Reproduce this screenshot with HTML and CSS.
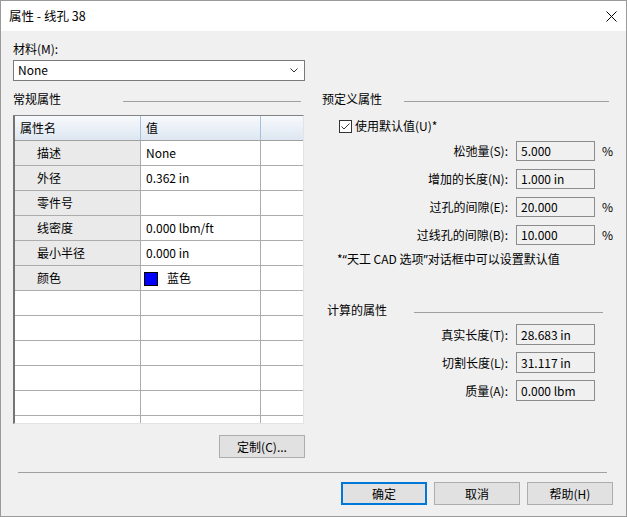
FILE: index.html
```html
<!DOCTYPE html>
<html lang="zh-CN">
<head>
  <meta charset="UTF-8">
  <title>属性 - 线孔 38</title>
  <link rel="stylesheet" href="styles.css">
</head>
<body>
  <div class="dialog">
    <div class="titlebar">
      <span class="title">属性 - 线孔 38</span>
      <svg class="close" width="11" height="11" viewBox="0 0 11 11">
        <path d="M0.5 0.5 L10.5 10.5 M10.5 0.5 L0.5 10.5" stroke="#000" stroke-width="1" fill="none"/>
      </svg>
    </div>

    <div class="content">
      <div class="columns">
        <!-- material -->
        <div class="material">
          <div class="field-label">材料(M):</div>
          <div class="combo">
            <span>None</span>
            <svg width="8" height="5" viewBox="0 0 8 5">
              <path d="M0.5 0.5 L4 4 L7.5 0.5" stroke="#333" stroke-width="1" fill="none"/>
            </svg>
          </div>
        </div>

        <!-- general properties -->
        <div class="col-left">
          <div class="group-head">
            <span>常规属性</span>
            <span class="rule rule-general"></span>
          </div>
          <div class="prop-table">
            <div class="row head">
              <div class="cell">属性名</div>
              <div class="cell">值</div>
              <div class="cell"></div>
            </div>
            <div class="row">
              <div class="cell name">描述</div>
              <div class="cell">None</div>
              <div class="cell"></div>
            </div>
            <div class="row">
              <div class="cell name">外径</div>
              <div class="cell">0.362 in</div>
              <div class="cell"></div>
            </div>
            <div class="row">
              <div class="cell name">零件号</div>
              <div class="cell"></div>
              <div class="cell"></div>
            </div>
            <div class="row">
              <div class="cell name">线密度</div>
              <div class="cell">0.000 lbm/ft</div>
              <div class="cell"></div>
            </div>
            <div class="row">
              <div class="cell name">最小半径</div>
              <div class="cell">0.000 in</div>
              <div class="cell"></div>
            </div>
            <div class="row">
              <div class="cell name">颜色</div>
              <div class="cell"><span class="swatch"></span>蓝色</div>
              <div class="cell"></div>
            </div>
            <div class="row"><div class="cell"></div><div class="cell"></div><div class="cell"></div></div>
            <div class="row"><div class="cell"></div><div class="cell"></div><div class="cell"></div></div>
            <div class="row"><div class="cell"></div><div class="cell"></div><div class="cell"></div></div>
            <div class="row"><div class="cell"></div><div class="cell"></div><div class="cell"></div></div>
            <div class="row"><div class="cell"></div><div class="cell"></div><div class="cell"></div></div>
            <div class="row"><div class="cell"></div><div class="cell"></div><div class="cell"></div></div>
          </div>
          <div class="left-actions">
            <button class="btn">定制(C)...</button>
          </div>
        </div>

        <!-- predefined + computed -->
        <div class="col-right">
          <div class="group-head">
            <span>预定义属性</span>
            <span class="rule rule-predef"></span>
          </div>
          <label class="check">
            <svg width="13" height="13" viewBox="0 0 13 13">
              <rect x="0.5" y="0.5" width="12" height="12" fill="#fff" stroke="#333"/>
              <path d="M2.5 6.5 L5 9 L10.5 3.5" stroke="#333" stroke-width="1" fill="none"/>
            </svg>
            <span>使用默认值(U)*</span>
          </label>
          <div class="fields">
            <div class="f-label">松弛量(S):</div>
            <div class="f-box">5.000</div>
            <div class="f-unit">%</div>
            <div class="f-label">增加的长度(N):</div>
            <div class="f-box">1.000 in</div>
            <div class="f-unit"></div>
            <div class="f-label">过孔的间隙(E):</div>
            <div class="f-box">20.000</div>
            <div class="f-unit">%</div>
            <div class="f-label">过线孔的间隙(B):</div>
            <div class="f-box">10.000</div>
            <div class="f-unit">%</div>
          </div>
          <div class="note">*<span class="q">“</span>天工 CAD 选项<span class="q">”</span>对话框中可以设置默认值</div>

          <div class="group-head calc-head">
            <span>计算的属性</span>
            <span class="rule rule-calc"></span>
          </div>
          <div class="fields calc">
            <div class="f-label">真实长度(T):</div>
            <div class="f-box">28.683 in</div>
            <div class="f-unit"></div>
            <div class="f-label">切割长度(L):</div>
            <div class="f-box">31.117 in</div>
            <div class="f-unit"></div>
            <div class="f-label">质量(A):</div>
            <div class="f-box">0.000 lbm</div>
            <div class="f-unit"></div>
          </div>
        </div>
      </div>

      <div class="separator"></div>

      <div class="actions">
        <button class="btn default">确定</button>
        <button class="btn">取消</button>
        <button class="btn">帮助(H)</button>
      </div>
    </div>
  </div>
</body>
</html>
```

FILE: styles.css
```css
body {
  margin: 0;
  padding: 0;
  font-family: "Microsoft YaHei UI", "Segoe UI", "Noto Sans CJK SC", sans-serif;
  font-size: 12px;
  line-height: 16px;
  color: #000;
  background: #fff;
}

.dialog {
  width: 627px;
  height: 517px;
  box-sizing: border-box;
  border: 1px solid #9a9a9a;
  background: #f0f0f0;
  display: flex;
  flex-direction: column;
}

.titlebar {
  height: 30px;
  background: #fff;
  display: flex;
  align-items: center;
  justify-content: space-between;
  padding: 0 9px 0 8px;
}

.title {
  font-size: 12.5px;
}

.close {
  display: block;
}

.content {
  padding: 10px 13px 0 12px;
}

.columns {
  display: grid;
  grid-template-columns: 292px 1fr;
  column-gap: 17px;
}

.material {
  grid-column: 1 / 3;
  width: 292px;
}

.combo {
  margin-top: 3px;
  height: 21px;
  box-sizing: border-box;
  border: 1px solid #7a7a7a;
  background: #fff;
  display: flex;
  align-items: center;
  justify-content: space-between;
  padding: 0 6px 2px 4px;
}

.combo svg {
  display: block;
  margin-top: 2px;
}

.group-head {
  margin-top: 10px;
  display: flex;
  align-items: center;
  height: 16px;
}

.rule {
  height: 1px;
  background: #a0a0a0;
  margin-top: 4px;
}

.rule-general {
  margin-left: 62px;
  width: 178px;
}

.rule-predef {
  margin-left: 22px;
  width: 205px;
}

.rule-calc {
  margin-left: 27px;
  width: 189px;
}

/* property grid */
.prop-table {
  margin-top: 8px;
  width: 291px;
  height: 309px;
  box-sizing: border-box;
  overflow: hidden;
  background: #fff;
  border-top: 1px solid #828282;
  border-left: 2px solid #747474;
  border-right: 1px solid #e3e3e3;
  border-bottom: 1px solid #e3e3e3;
}

.row {
  display: grid;
  grid-template-columns: 126px 120px 1fr;
  height: 25px;
}

.cell {
  box-sizing: border-box;
  border-bottom: 1px solid #acacac;
  border-right: 1px solid #acacac;
  padding-left: 5px;
  display: flex;
  align-items: center;
  white-space: nowrap;
}

.cell:last-child {
  border-right: none;
}

.row.head {
  background: linear-gradient(to bottom, #f7f9fc, #dce6f1);
}

.row.head .cell {
  border-right-color: #a3bfdc;
  border-bottom-color: #a0a0a0;
}

.row.head .cell:last-child {
  border-right: none;
}

.cell.name {
  background: #eaeaea;
  padding-left: 22px;
}

.swatch {
  width: 14px;
  height: 14px;
  box-sizing: border-box;
  background: #0000ff;
  border: 1px solid #000;
  margin: 1px 9px 0 -2px;
}

.left-actions {
  display: flex;
  justify-content: flex-end;
  margin-top: 11px;
}

.btn {
  font-family: inherit;
  font-size: 12px;
  width: 86px;
  height: 23px;
  padding: 0;
  background: #e1e1e1;
  border: 1px solid #adadad;
  color: #000;
}

.btn.default {
  border: 2px solid #0078d7;
}

/* right column */
.check {
  display: flex;
  align-items: center;
  margin: 11px 0 0 17px;
  gap: 3px;
}

.check svg {
  display: block;
}

.fields {
  margin-top: 7px;
  display: grid;
  grid-template-columns: 187px 79px 1fr;
  column-gap: 7px;
  row-gap: 8px;
}

.f-label {
  text-align: right;
  padding-right: 1px;
  align-self: center;
  white-space: nowrap;
}

.f-box {
  height: 20px;
  box-sizing: border-box;
  border: 1px solid #8c8c8c;
  padding-left: 4px;
  display: flex;
  align-items: center;
}

.f-unit {
  align-self: center;
}

.note {
  margin: 6px 0 0 15px;
  white-space: nowrap;
}

.note .q {
  font-family: "Segoe UI", "Noto Sans", sans-serif;
}

.calc-head {
  margin-top: 34px;
  padding-left: 5px;
}

.fields.calc {
  margin-top: 6px;
  row-gap: 7px;
}

.fields.calc .f-box {
  height: 21px;
}

.separator {
  margin: 14px 6px 0 5px;
  height: 1px;
  background: #a0a0a0;
}

.actions {
  display: flex;
  justify-content: flex-end;
  gap: 7px;
  margin-top: 9px;
}
```
